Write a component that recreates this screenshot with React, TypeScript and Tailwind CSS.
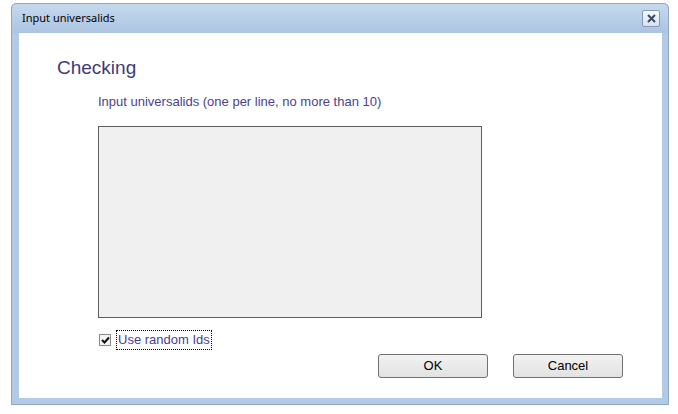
import { useState } from "react";

const CloseButton = () => (
  <button className="flex h-[17px] w-[18px] items-center justify-center rounded-[2px] border border-[#8499b6] bg-gradient-to-b from-[#f7fafd] to-[#d6e1ee]">
    <svg width="9" height="9" viewBox="0 0 9 9">
      <path d="M1 1 L8 8 M8 1 L1 8" stroke="#3b4a5e" strokeWidth="2" />
    </svg>
  </button>
);

const DialogButton = ({ label }: { label: string }) => (
  <button className="h-[24px] w-[110px] rounded-[3px] border border-[#707070] bg-gradient-to-b from-[#f2f2f2] to-[#e2e2e2] text-[13px] text-black font-['Liberation_Sans',Arial,sans-serif]">
    {label}
  </button>
);

export default function App() {
  const [useRandom, setUseRandom] = useState(true);

  return (
    <div className="h-[414px] w-[678px] bg-white pl-[11px] pt-[3px]">
      {/* window frame */}
      <div className="flex h-[402px] w-[658px] flex-col rounded-t-[5px] border border-[#8ea5c3] bg-[#b3cae4]">
        {/* title bar */}
        <div className="flex h-[29px] items-center justify-between rounded-t-[5px] bg-gradient-to-b from-[#c6d9ee] to-[#abc4e1] pl-[10px] pr-[8px]">
          <span className="text-[11px] text-black font-['Noto_Sans',sans-serif]">
            Input universalids
          </span>
          <CloseButton />
        </div>

        {/* client area */}
        <div className="mb-[6px] ml-[7px] mr-[6px] flex flex-1 flex-col bg-white font-['Liberation_Sans',Arial,sans-serif]">
          <h1 className="mt-[24px] pl-[38px] text-[19px] leading-[22px] text-[#3e3a78]">
            Checking
          </h1>

          <div className="flex flex-col pl-[79px]">
            <label className="mt-[16px] text-[13px] leading-[14px] text-[#4a3f8f]">
              Input universalids (one per line, no more than 10)
            </label>
            <textarea className="mt-[17px] h-[192px] w-[384px] resize-none border border-[#5e5e5e] bg-[#f0f0f0] outline-none" />

            <label className="mt-[12px] flex h-[20px] items-center">
              <span
                onClick={() => setUseRandom(!useRandom)}
                className="ml-[1px] flex h-[12px] w-[12px] items-center justify-center border border-[#8a8a8a] bg-[#f4f4f4]"
              >
                {useRandom && (
                  <svg width="9" height="8" viewBox="0 0 9 8">
                    <path d="M1 4 L3.5 6.5 L8 1.5" stroke="#111" strokeWidth="2" fill="none" />
                  </svg>
                )}
              </span>
              <span className="ml-[5px] border border-dotted border-black px-[1px] text-[13px] leading-[18px] text-[#463e8e]">
                Use random Ids
              </span>
            </label>
          </div>

          <div className="mt-[4px] flex justify-end gap-[25px] pr-[39px]">
            <DialogButton label="OK" />
            <DialogButton label="Cancel" />
          </div>
        </div>
      </div>
    </div>
  );
}
